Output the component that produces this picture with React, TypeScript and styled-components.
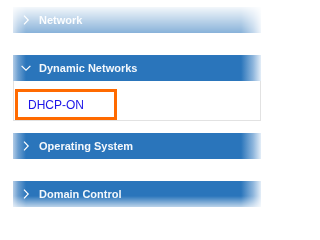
import React from "react";
import styled, { createGlobalStyle } from "styled-components";

const Global = createGlobalStyle`
  html, body { margin: 0; padding: 0; background: #ffffff; }
  body { font-family: "Liberation Sans", Arial, sans-serif; }
`;

const Viewport = styled.div`
  width: 271px;
  height: 218px;
  overflow: hidden;
  background: #ffffff;
  -webkit-mask-image: linear-gradient(
    to bottom,
    rgba(0, 0, 0, 0) 4px,
    rgba(0, 0, 0, 1) 56px,
    rgba(0, 0, 0, 1) calc(100% - 22px),
    rgba(0, 0, 0, 0) calc(100% - 6px)
  );
  mask-image: linear-gradient(
    to bottom,
    rgba(0, 0, 0, 0) 4px,
    rgba(0, 0, 0, 1) 56px,
    rgba(0, 0, 0, 1) calc(100% - 22px),
    rgba(0, 0, 0, 0) calc(100% - 6px)
  );
`;

const List = styled.div`
  display: flex;
  flex-direction: column;
  padding: 7px 10px 0 13px;
`;

const Section = styled.div<{ $open?: boolean }>`
  display: flex;
  flex-direction: column;
  margin-bottom: ${(p) => (p.$open ? 12 : 22)}px;
`;

const Header = styled.div`
  display: flex;
  align-items: center;
  height: 26px;
  padding-left: 8px;
  background: linear-gradient(
    to right,
    #b2cce7 0px,
    #6d9fd0 5px,
    #2a75bb 13px,
    #2a75bb calc(100% - 20px),
    #8db5dc calc(100% - 8px),
    #e4eef8 100%
  );
  color: #f4f8fc;
  font-size: 11px;
  font-weight: bold;
  letter-spacing: 0;
  cursor: pointer;
`;

const IconBox = styled.span`
  display: flex;
  align-items: center;
  justify-content: center;
  width: 10px;
  height: 10px;
  margin-right: 8px;
`;

const Title = styled.span`
  line-height: 26px;
`;

const Panel = styled.div`
  background: #ffffff;
  border: 1px solid #e2e2e2;
  border-top: none;
  padding: 8px 0 0 1px;
  display: flex;
`;

const Item = styled.div`
  box-sizing: border-box;
  width: 102px;
  height: 31px;
  border: 3px solid #ff6a00;
  padding-left: 10px;
  display: flex;
  align-items: center;
  color: #1c14e8;
  font-size: 12px;
`;

const Chevron = ({ open }: { open?: boolean }) => (
  <IconBox>
    <svg width="10" height="10" viewBox="0 0 10 10">
      {open ? (
        <path d="M0.6 2.8 L5 7.2 L9.4 2.8" fill="none" stroke="#ffffff" strokeWidth="1.2" />
      ) : (
        <path d="M3 0.6 L7.2 5 L3 9.4" fill="none" stroke="#ffffff" strokeWidth="1.2" />
      )}
    </svg>
  </IconBox>
);

const sections = [
  { title: "Network", open: false, items: [] as string[] },
  { title: "Dynamic Networks", open: true, items: ["DHCP-ON"] },
  { title: "Operating System", open: false, items: [] as string[] },
  { title: "Domain Control", open: false, items: [] as string[] },
];

export default function App() {
  return (
    <>
      <Global />
      <Viewport>
        <List>
          {sections.map((s) => (
            <Section key={s.title} $open={s.open}>
              <Header>
                <Chevron open={s.open} />
                <Title>{s.title}</Title>
              </Header>
              {s.open && (
                <Panel>
                  {s.items.map((it) => (
                    <Item key={it}>{it}</Item>
                  ))}
                </Panel>
              )}
            </Section>
          ))}
        </List>
      </Viewport>
    </>
  );
}
